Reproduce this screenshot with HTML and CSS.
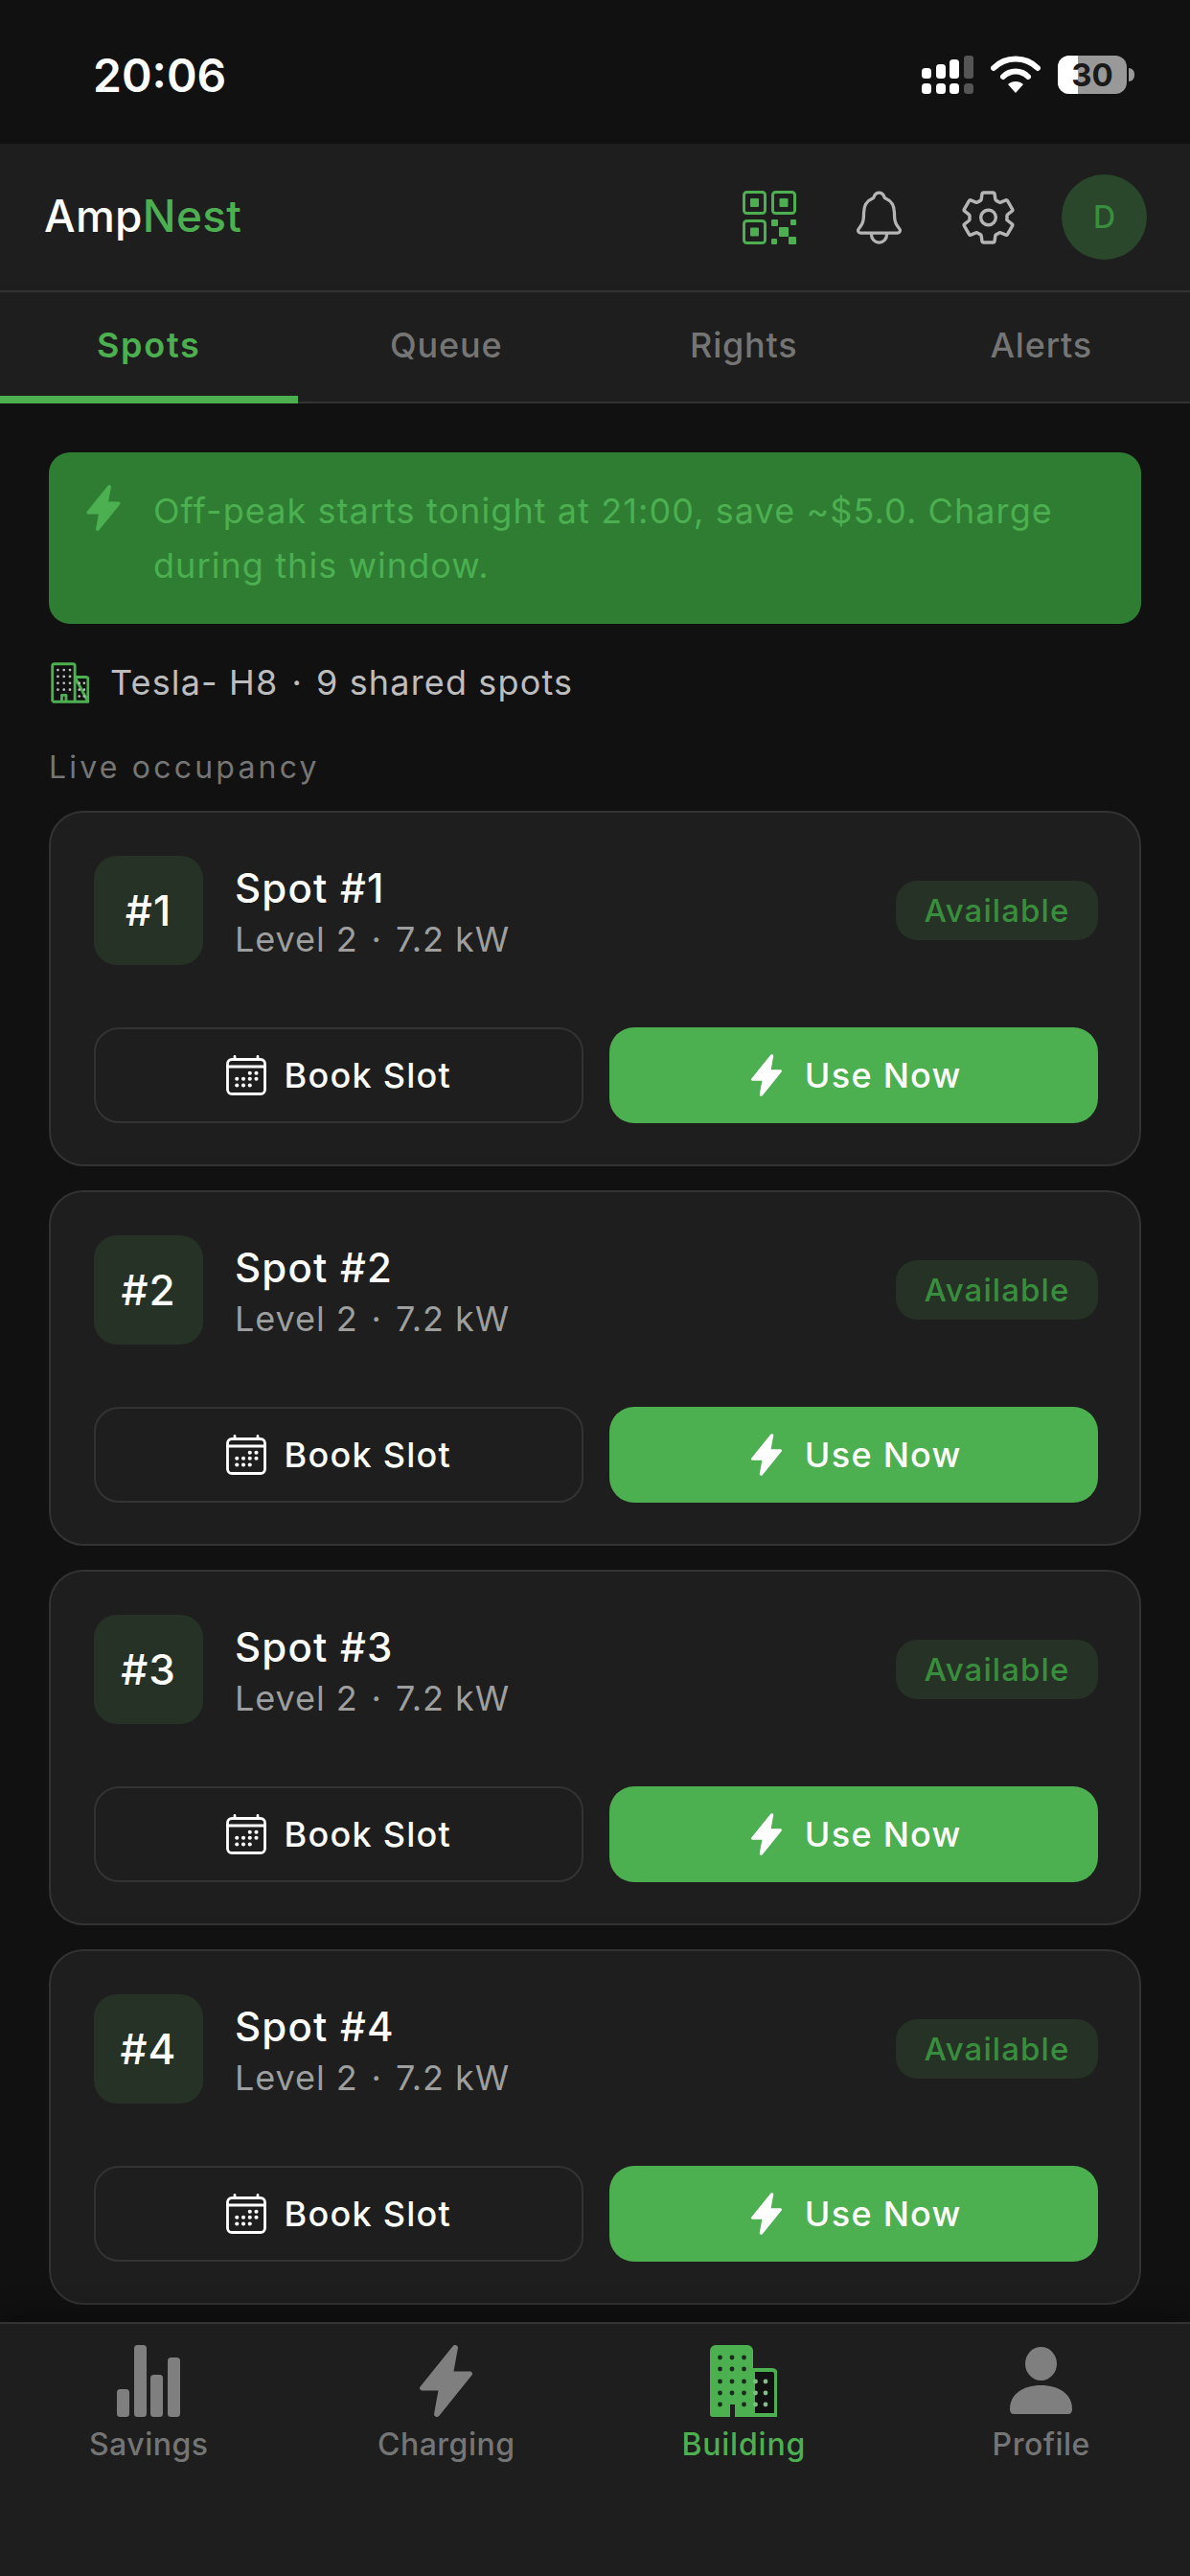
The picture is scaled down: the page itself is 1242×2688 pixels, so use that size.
FILE: index.html
```html
<!DOCTYPE html>
<html lang="en">
<head>
<meta charset="utf-8">
<title>AmpNest</title>
<link rel="stylesheet" href="styles.css">
</head>
<body>
<svg class="defs" aria-hidden="true">
  <symbol id="bolt" viewBox="80 16 352 480"><path fill="currentColor" d="M194.82 496a18.36 18.36 0 01-18.1-21.53v-.11L204.83 320H96a16 16 0 01-12.44-26.06L302.73 23a18.45 18.45 0 0132.8 14.09c0 .08 0 .08-.07.16L307.09 192H416a16 16 0 0112.44 26.06L209.24 489a18.45 18.45 0 01-14.42 7z"/></symbol>
  <symbol id="calendar" viewBox="32 32 448 448">
    <rect x="48" y="80" width="416" height="384" rx="48" fill="none" stroke="currentColor" stroke-width="30"/>
    <path d="M128 48v32M384 48v32M464 160H48" fill="none" stroke="currentColor" stroke-width="30" stroke-linecap="round"/>
    <g fill="currentColor"><circle cx="296" cy="232" r="22"/><circle cx="368" cy="232" r="22"/><circle cx="152" cy="296" r="22"/><circle cx="224" cy="296" r="22"/><circle cx="296" cy="296" r="22"/><circle cx="368" cy="296" r="22"/><circle cx="152" cy="368" r="22"/><circle cx="224" cy="368" r="22"/><circle cx="296" cy="368" r="22"/></g>
  </symbol>
</svg>

<div class="app">
  <div class="statusbar">
    <span class="time">20:06</span>
    <div class="status-icons">
      <svg class="signal" width="54" height="40" viewBox="0 0 54 40">
        <g fill="#fff">
          <rect x="0" y="13" width="10" height="11" rx="3.5"/><rect x="15" y="9" width="10" height="15" rx="3.5"/><rect x="29" y="4" width="10" height="20" rx="3.5"/>
          <rect x="0" y="29" width="10" height="11" rx="3.5"/><rect x="15" y="29" width="10" height="11" rx="3.5"/><rect x="29" y="29" width="10" height="11" rx="3.5"/>
        </g>
        <g fill="#555"><rect x="44" y="0" width="10" height="24" rx="3"/><rect x="44" y="29" width="10" height="11" rx="3.5"/></g>
      </svg>
      <svg class="wifi" width="52" height="40" viewBox="0 0 52 40">
        <path d="M3 13C9 7 17 3.500 26 3.500S43 7 49 13" fill="none" stroke="#fff" stroke-width="6" stroke-linecap="round"/>
        <path d="M13 22C16.500 18.500 21 16.500 26 16.500S35.500 18.500 39 22" fill="none" stroke="#fff" stroke-width="6" stroke-linecap="round"/>
        <path d="M18 30C20 28 23 27 26 27S32 28 34 30L26 39Z" fill="#fff"/>
      </svg>
      <div class="battery">
        <div class="battery-body"><div class="battery-fill"></div><span class="battery-text">30</span></div>
        <div class="battery-cap"></div>
      </div>
    </div>
  </div>

  <header class="header">
    <div class="logo">Amp<span class="logo-accent">Nest</span></div>
    <div class="header-actions">
      <svg class="icon-qr" width="56" height="56" viewBox="0 0 56 56">
        <g fill="none" stroke="#4caf50" stroke-width="3"><rect x="1.500" y="1.500" width="22" height="22" rx="3"/><rect x="31.500" y="1.500" width="23" height="22" rx="3"/><rect x="1.500" y="31.500" width="22" height="23" rx="3"/></g>
        <g fill="#4caf50"><rect x="8" y="8" width="9" height="9" rx="1"/><rect x="38.500" y="8" width="9" height="9" rx="1"/><rect x="8" y="38.500" width="9" height="9" rx="1"/><rect x="30" y="30" width="7" height="7" rx="1"/><rect x="50" y="30" width="6" height="6" rx="1"/><rect x="38" y="38" width="10" height="10" rx="1"/><rect x="30" y="50" width="6" height="6" rx="1"/><rect x="48" y="48" width="8" height="8" rx="1"/></g>
      </svg>
      <svg class="icon-bell" width="49" height="56" viewBox="68 32 376 448">
        <path fill="none" stroke="#b5b5b5" stroke-width="26" stroke-linecap="round" stroke-linejoin="round" d="M427.68 351.43C402 320 383.87 304 383.87 217.35 383.87 138 343.35 109.73 310 96c-4.43-1.82-8.6-6-9.95-10.55C294.2 65.54 277.8 48 256 48s-38.21 17.55-44 37.47c-1.35 4.6-5.52 8.71-9.95 10.53-33.39 13.75-73.87 41.92-73.87 121.35C128.13 304 110 320 84.32 351.43 73.68 364.45 83 384 101.61 384h308.88c18.51 0 27.77-19.61 17.19-32.57zM320 384v16a64 64 0 01-128 0v-16"/>
      </svg>
      <svg class="icon-gear" width="55" height="56" viewBox="32 26 448 460">
        <path fill="none" stroke="#b5b5b5" stroke-width="28" stroke-linecap="round" stroke-linejoin="round" d="M262.29 192.31a64 64 0 1057.4 57.4 64.13 64.13 0 00-57.4-57.4zM416.39 256a154.34 154.34 0 01-1.53 20.79l45.21 35.46a10.81 10.81 0 012.45 13.75l-42.77 74a10.81 10.81 0 01-13.14 4.59l-44.9-18.08a16.11 16.11 0 00-15.17 1.75A164.48 164.48 0 01325 400.8a15.94 15.94 0 00-8.82 12.14l-6.73 47.89a11.08 11.08 0 01-10.68 9.17h-85.54a11.11 11.11 0 01-10.69-8.87l-6.72-47.82a16.07 16.07 0 00-9-12.22 155.3 155.3 0 01-21.46-12.57 16 16 0 00-15.11-1.71l-44.89 18.07a10.81 10.81 0 01-13.14-4.58l-42.77-74a10.8 10.8 0 012.45-13.75l38.21-30a16.05 16.05 0 006-14.08c-.36-4.17-.58-8.33-.58-12.5s.21-8.27.58-12.35a16 16 0 00-6.07-13.94l-38.19-30A10.81 10.81 0 0149.48 186l42.77-74a10.81 10.81 0 0113.14-4.59l44.9 18.08a16.11 16.11 0 0015.17-1.75A164.48 164.48 0 01187 111.2a15.94 15.94 0 008.82-12.14l6.73-47.89A11.08 11.08 0 01213.23 42h85.54a11.11 11.11 0 0110.69 8.87l6.72 47.82a16.07 16.07 0 009 12.22 155.3 155.3 0 0121.46 12.57 16 16 0 0015.11 1.71l44.89-18.07a10.81 10.81 0 0113.14 4.58l42.77 74a10.8 10.8 0 01-2.45 13.75l-38.21 30a16.05 16.05 0 00-6.07 14.08c.33 4.14.55 8.3.55 12.47z"/>
      </svg>
      <div class="avatar">D</div>
    </div>
  </header>

  <nav class="tabs">
    <div class="tab tab-active">Spots</div>
    <div class="tab">Queue</div>
    <div class="tab">Rights</div>
    <div class="tab">Alerts</div>
  </nav>

  <main class="content">
    <div class="banner">
      <svg class="banner-icon"><use href="#bolt"/></svg>
      <p class="banner-text">Off-peak starts tonight at 21:00, save ~$5.0. Charge during this window.</p>
    </div>

    <div class="building-row">
      <svg class="building-small" width="40" height="43" viewBox="0 0 70 75">
        <path d="M3 72V7a4 4 0 014-4h33a4 4 0 014 4v65M44 27h20a4 4 0 014 4v41ZM3 72h65M20 72v-12h8v12" fill="none" stroke="#4caf50" stroke-width="5" stroke-linejoin="round"/>
        <g fill="#bdbdbd"><circle cx="13" cy="14" r="2.400"/><circle cx="24" cy="14" r="2.400"/><circle cx="35" cy="14" r="2.400"/><circle cx="13" cy="26" r="2.400"/><circle cx="24" cy="26" r="2.400"/><circle cx="35" cy="26" r="2.400"/><circle cx="13" cy="38" r="2.400"/><circle cx="24" cy="38" r="2.400"/><circle cx="35" cy="38" r="2.400"/><circle cx="13" cy="50" r="2.400"/><circle cx="24" cy="50" r="2.400"/><circle cx="35" cy="50" r="2.400"/><circle cx="52" cy="38" r="2.400"/><circle cx="61" cy="38" r="2.400"/><circle cx="52" cy="50" r="2.400"/><circle cx="61" cy="50" r="2.400"/><circle cx="52" cy="62" r="2.400"/><circle cx="61" cy="62" r="2.400"/></g>
      </svg>
      <span class="building-text">Tesla- H8<span class="sep">·</span>9 shared spots</span>
    </div>

    <div class="section-label">Live occupancy</div>

    <div class="card-list">
      <section class="card">
        <div class="card-top">
          <div class="spot-num">#1</div>
          <div class="spot-info"><div class="spot-name">Spot #1</div><div class="spot-meta">Level 2<span class="sep">·</span>7.2 kW</div></div>
          <div class="badge">Available</div>
        </div>
        <div class="card-actions">
          <div class="btn btn-outline"><svg class="btn-cal"><use href="#calendar"/></svg>Book Slot</div>
          <div class="btn btn-primary"><svg class="btn-bolt"><use href="#bolt"/></svg>Use Now</div>
        </div>
      </section>
      <section class="card">
        <div class="card-top">
          <div class="spot-num">#2</div>
          <div class="spot-info"><div class="spot-name">Spot #2</div><div class="spot-meta">Level 2<span class="sep">·</span>7.2 kW</div></div>
          <div class="badge">Available</div>
        </div>
        <div class="card-actions">
          <div class="btn btn-outline"><svg class="btn-cal"><use href="#calendar"/></svg>Book Slot</div>
          <div class="btn btn-primary"><svg class="btn-bolt"><use href="#bolt"/></svg>Use Now</div>
        </div>
      </section>
      <section class="card">
        <div class="card-top">
          <div class="spot-num">#3</div>
          <div class="spot-info"><div class="spot-name">Spot #3</div><div class="spot-meta">Level 2<span class="sep">·</span>7.2 kW</div></div>
          <div class="badge">Available</div>
        </div>
        <div class="card-actions">
          <div class="btn btn-outline"><svg class="btn-cal"><use href="#calendar"/></svg>Book Slot</div>
          <div class="btn btn-primary"><svg class="btn-bolt"><use href="#bolt"/></svg>Use Now</div>
        </div>
      </section>
      <section class="card">
        <div class="card-top">
          <div class="spot-num">#4</div>
          <div class="spot-info"><div class="spot-name">Spot #4</div><div class="spot-meta">Level 2<span class="sep">·</span>7.2 kW</div></div>
          <div class="badge">Available</div>
        </div>
        <div class="card-actions">
          <div class="btn btn-outline"><svg class="btn-cal"><use href="#calendar"/></svg>Book Slot</div>
          <div class="btn btn-primary"><svg class="btn-bolt"><use href="#bolt"/></svg>Use Now</div>
        </div>
      </section>
    </div>
  </main>

  <footer class="bottom-nav">
    <div class="nav-item">
      <svg class="nav-icon" width="66" height="75" viewBox="0 0 66 75"><g fill="#7f7f7f"><rect x="0" y="46" width="13" height="29" rx="3.500"/><rect x="18" y="0" width="13" height="75" rx="3.500"/><rect x="35" y="31" width="13" height="44" rx="3.500"/><rect x="53" y="13" width="13" height="62" rx="3.500"/></g></svg>
      <span class="nav-label">Savings</span>
    </div>
    <div class="nav-item">
      <svg class="nav-icon nav-bolt"><use href="#bolt"/></svg>
      <span class="nav-label">Charging</span>
    </div>
    <div class="nav-item nav-active">
      <svg class="nav-icon" width="70" height="75" viewBox="0 0 70 75">
        <path d="M45 26h20a4 4 0 014 4v43H45Z" fill="#111" stroke="#4caf50" stroke-width="4"/>
        <path d="M6 0h33a6 6 0 016 6v69H26V62h-5v13H3a3 3 0 01-3-3V6a6 6 0 016-6Z" fill="#4caf50"/>
        <g fill="#1a2a1c"><circle cx="10.500" cy="13" r="2.400"/><circle cx="23" cy="13" r="2.400"/><circle cx="35.500" cy="13" r="2.400"/><circle cx="10.500" cy="25" r="2.400"/><circle cx="23" cy="25" r="2.400"/><circle cx="35.500" cy="25" r="2.400"/><circle cx="10.500" cy="38" r="2.400"/><circle cx="23" cy="38" r="2.400"/><circle cx="35.500" cy="38" r="2.400"/><circle cx="10.500" cy="50" r="2.400"/><circle cx="23" cy="50" r="2.400"/><circle cx="35.500" cy="50" r="2.400"/><circle cx="10.500" cy="62" r="2.400"/><circle cx="35.500" cy="62" r="2.400"/></g>
        <g fill="#82bd85"><circle cx="47.500" cy="38" r="2.400"/><circle cx="58" cy="38" r="2.400"/><circle cx="47.500" cy="50" r="2.400"/><circle cx="58" cy="50" r="2.400"/><circle cx="47.500" cy="62" r="2.400"/><circle cx="58" cy="62" r="2.400"/></g>
      </svg>
      <span class="nav-label">Building</span>
    </div>
    <div class="nav-item">
      <svg class="nav-icon" width="65" height="75" viewBox="0 0 65 75"><g fill="#7f7f7f"><ellipse cx="32.500" cy="19.500" rx="16.500" ry="17.500"/><path d="M0 67C0 51 14 42 32.500 42S65 51 65 67c0 3-1.500 5-4 5H4c-2.500 0-4-2-4-5Z"/></g></svg>
      <span class="nav-label">Profile</span>
    </div>
  </footer>
</div>
</body>
</html>
```

FILE: styles.css
```css
* { box-sizing: border-box; }

html, body { margin: 0; padding: 0; background: #111; }

body { font-family: Inter, "Liberation Sans", sans-serif; color: #fff; }

.defs { position: absolute; width: 0; height: 0; overflow: hidden; }

.app {
  width: 1242px;
  height: 2688px;
  display: flex;
  flex-direction: column;
  overflow: hidden;
  background: #111;
}

/* Status bar */
.statusbar {
  height: 150px;
  flex: none;
  display: flex;
  align-items: flex-start;
  justify-content: space-between;
  padding: 50px 58px 0 97px;
  background: #111;
}

.time { font-size: 48px; line-height: 58px; font-weight: 600; color: #fff; }

.status-icons { display: flex; align-items: flex-start; margin-top: 8px; }

.signal { margin-right: 18px; }

.wifi { margin-right: 18px; }

.battery { display: flex; align-items: center; height: 40px; }

.battery-body {
  position: relative;
  width: 72px;
  height: 40px;
  border-radius: 12px;
  background: #999;
  overflow: hidden;
  display: flex;
  align-items: center;
  justify-content: center;
}

.battery-fill { position: absolute; left: 0; top: 0; bottom: 0; width: 21px; background: #fff; }

.battery-text { position: relative; font-size: 33px; line-height: 40px; font-weight: 700; color: #1a1a1a; }

.battery-cap { width: 6px; height: 14px; margin-left: 2px; border-radius: 0 7px 7px 0; background: #999; }

/* Header */
.header {
  height: 155px;
  flex: none;
  display: flex;
  align-items: center;
  justify-content: space-between;
  padding: 0 45px 0 46px;
  background: #1e1e1e;
  border-bottom: 2px solid #333;
}

.logo { font-size: 46px; line-height: 56px; font-weight: 500; letter-spacing: 0.3px; margin-top: -3px; color: #fff; }

.logo-accent { color: #4caf50; }

.header-actions { display: flex; align-items: center; }

.icon-qr { margin-right: 62px; }

.icon-bell { margin-right: 62px; }

.icon-gear { margin-right: 49px; }

.avatar {
  width: 89px;
  height: 89px;
  border-radius: 50%;
  background: #2a472c;
  color: #388e3c;
  font-size: 32px;
  font-weight: 500;
  display: flex;
  align-items: center;
  justify-content: center;
}

/* Tabs */
.tabs {
  height: 116px;
  flex: none;
  display: grid;
  grid-template-columns: repeat(4, 1fr);
  background: #1e1e1e;
  border-bottom: 2px solid #333;
}

.tab {
  display: flex;
  align-items: center;
  justify-content: center;
  margin-bottom: -2px;
  padding-top: 2px;
  font-size: 36px;
  font-weight: 500;
  letter-spacing: 0.8px;
  color: #757575;
  border-bottom: 8px solid transparent;
}

.tab-active { color: #4caf50; letter-spacing: 1.7px; font-weight: 600; border-bottom-color: #4caf50; }

/* Content */
.content { flex: 1; min-height: 0; padding: 51px 51px 0; overflow: hidden; }

.banner {
  height: 179px;
  display: flex;
  align-items: flex-start;
  padding: 34px 40px 0 39px;
  border-radius: 22px;
  background: #2e7d32;
}

.banner-icon { width: 36px; height: 48px; flex: none; margin-right: 34px; color: #4caf50; }

.banner-text { margin: -1px 0 0; font-size: 36px; line-height: 57px; letter-spacing: 1.08px; color: #4caf50; }

.building-row { display: flex; align-items: center; height: 43px; margin-top: 40px; }

.building-small { flex: none; margin: 0 22px 0 2px; }

.building-text { font-size: 36px; line-height: 43px; letter-spacing: 1.15px; color: #bdbdbd; }

.sep { margin: 0 14px; }

.section-label { margin-top: 47px; font-size: 32px; line-height: 40px; letter-spacing: 3.2px; color: #757575; }

.card-list { display: flex; flex-direction: column; gap: 25px; margin-top: 25px; }

.card {
  height: 371px;
  flex: none;
  padding: 45px 43px 43px 45px;
  border: 2px solid #333;
  border-radius: 36px;
  background: #1e1e1e;
  display: flex;
  flex-direction: column;
  justify-content: space-between;
}

.card-top { display: flex; align-items: center; }

.spot-num {
  width: 114px;
  height: 114px;
  flex: none;
  border-radius: 24px;
  background: #263226;
  display: flex;
  align-items: center;
  justify-content: center;
  font-size: 44px;
  font-weight: 500;
  letter-spacing: 1px;
  color: #fff;
}

.spot-info { flex: 1; margin-left: 33px; padding-top: 8px; }

.spot-name { font-size: 42px; line-height: 52px; font-weight: 500; letter-spacing: 1.2px; color: #fff; }

.spot-meta { font-size: 36px; line-height: 54px; letter-spacing: 0.95px; color: #9e9e9e; }

.badge {
  width: 211px;
  height: 62px;
  flex: none;
  border-radius: 22px;
  background: #263226;
  color: #388e3c;
  font-size: 33px;
  font-weight: 500;
  letter-spacing: 1.1px;
  display: flex;
  align-items: center;
  justify-content: center;
}

.card-actions { display: grid; grid-template-columns: 1fr 1fr; gap: 27px; }

.btn {
  height: 100px;
  border-radius: 26px;
  display: flex;
  align-items: center;
  justify-content: center;
  font-size: 36px;
  font-weight: 500;
  letter-spacing: 1.25px;
  color: #fff;
}

.btn-outline { border: 2px solid #333; }

.btn-primary { background: #4caf50; padding-left: 6px; }

.btn-cal { width: 42px; height: 42px; flex: none; margin-right: 19px; color: #fff; }

.btn-bolt { width: 32px; height: 44px; flex: none; margin-right: 24px; color: #fff; }

/* Bottom navigation */
.bottom-nav {
  height: 265px;
  flex: none;
  display: grid;
  grid-template-columns: repeat(4, 1fr);
  align-items: start;
  padding-top: 22px;
  background: #1e1e1e;
  border-top: 2px solid #333;
  box-shadow: 0 -12px 24px rgba(0, 0, 0, 0.3);
  position: relative;
}

.nav-item { display: flex; flex-direction: column; align-items: center; color: #7f7f7f; }

.nav-icon { display: block; flex: none; }

.nav-bolt { width: 55px; height: 75px; color: #7f7f7f; }

.nav-label { margin-top: 9px; font-size: 32px; line-height: 40px; font-weight: 500; letter-spacing: 0.5px; color: #757575; }

.nav-active .nav-label { color: #4caf50; font-weight: 500; letter-spacing: 0.8px; }
```
